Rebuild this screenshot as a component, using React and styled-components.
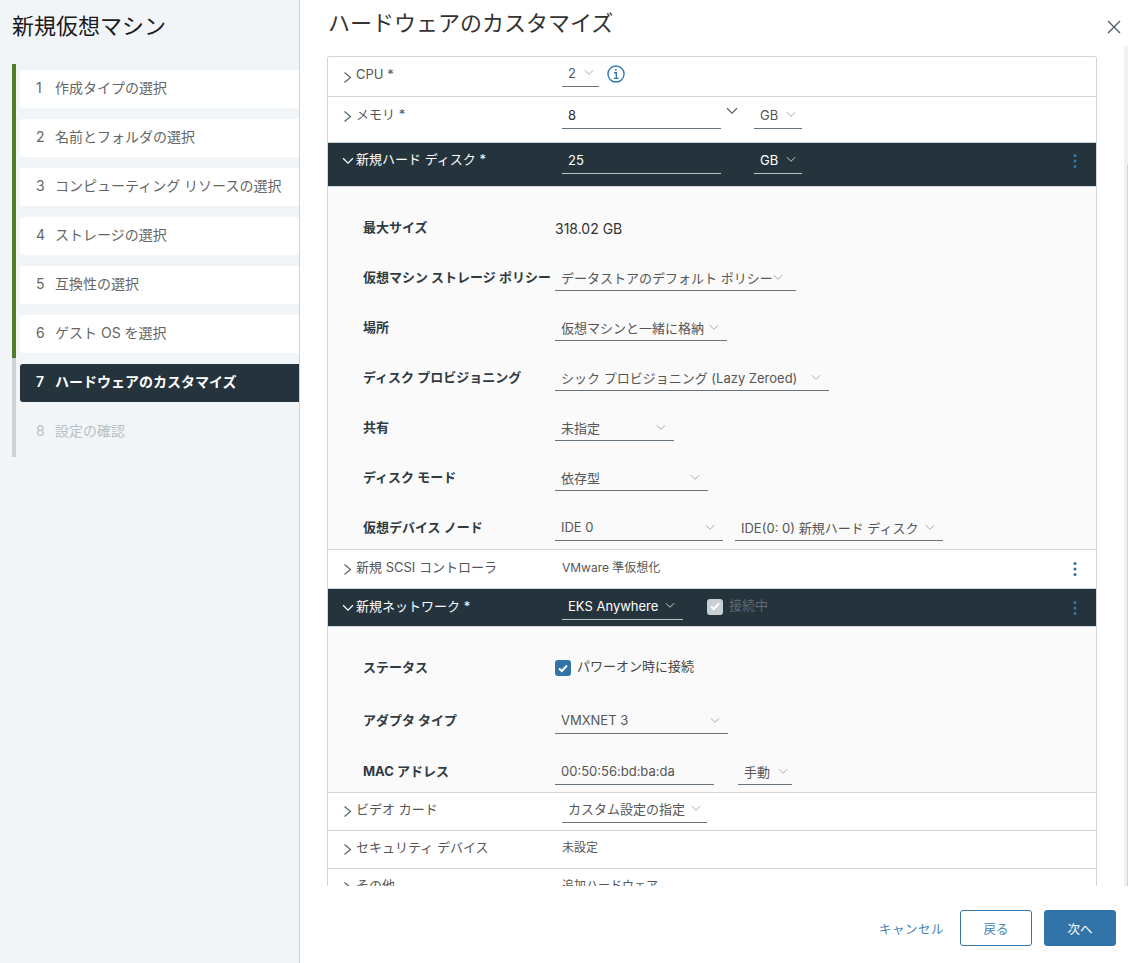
import React from 'react';
import styled, { createGlobalStyle } from 'styled-components';

const GlobalStyle = createGlobalStyle`
    html, body {
        margin: 0;
        padding: 0;
        background: #fff;
    }
    body {
        font-family: "Inter", "Noto Sans CJK JP", sans-serif;
        font-size: 13px;
        color: #565656;
    }
`;

const Page = styled.div`
    display: flex;
    width: 1128px;
    height: 963px;
    overflow: hidden;
    position: relative;
`;

const Sidebar = styled.aside`
    width: 299px;
    flex: none;
    background: #f2f5f8;
    border-right: 1px solid #c9d3da;
`;

const WizardTitle = styled.h2`
    margin: 0;
    height: 64px;
    padding: 11px 0 0 12px;
    box-sizing: border-box;
    font-size: 22px;
    line-height: 30px;
    font-weight: 400;
    color: #1a1a1a;
`;

const StepSlot = styled.div`
    margin-left: 12px;
    padding: 6px 0 5px 4px;
    border-left: 4px solid ${p => (p.$done ? '#4f7f28' : '#ccd3d6')};

    &:last-child {
        padding-bottom: 6px;
    }
`;

const Step = styled.div`
    display: flex;
    align-items: center;
    height: 38px;
    box-sizing: border-box;
    padding: 0 0 4px 16px;
    border-radius: 3px 0 0 3px;
    font-size: 14px;
    background: ${p => (p.$active ? '#25333d' : p.$todo ? 'transparent' : '#fff')};
    color: ${p => (p.$active ? '#fff' : p.$todo ? '#b9bfc3' : '#666')};
    font-weight: ${p => (p.$active ? 600 : 400)};
`;

const StepNumber = styled.span`
    width: 19px;
    flex: none;
`;

const Main = styled.main`
    flex: 1;
    display: flex;
    flex-direction: column;
    min-width: 0;
`;

const MainHeader = styled.header`
    height: 56px;
    flex: none;
    display: flex;
    justify-content: space-between;
    padding: 8px 5px 0 28px;
    box-sizing: border-box;
`;

const MainTitle = styled.h1`
    margin: 0;
    font-size: 22px;
    line-height: 30px;
    font-weight: 400;
    color: #333;
`;

const CloseButton = styled.button`
    width: 18px;
    height: 18px;
    margin: 11px 0 0;
    padding: 0;
    border: 0;
    background: none;
    color: #4a5b66;
`;

const ScrollArea = styled.div`
    height: 830px;
    flex: none;
    overflow: hidden;
    padding-left: 27px;
`;

const Track = styled.div`
    position: absolute;
    right: 0;
    top: 46px;
    width: 4px;
    height: 840px;
    background: #f1f1f1;

    &::after {
        content: '';
        position: absolute;
        right: 0;
        top: 119px;
        width: 1px;
        height: 721px;
        background: #d4d4d4;
    }
`;

const Table = styled.div`
    width: 770px;
    box-sizing: border-box;
    border: 1px solid #ccd6dc;
    border-bottom: 0;
    border-radius: 3px 3px 0 0;
`;

const Row = styled.div`
    display: flex;
    align-items: center;
    height: ${p => p.$h}px;
    box-sizing: border-box;
    padding-bottom: ${p => p.$pb || 0}px;
    border-bottom: 1px solid #ccd6dc;
    background: ${p => (p.$dark ? '#25333d' : '#fff')};
    color: ${p => (p.$dark ? '#fff' : '#565656')};
    position: relative;
`;

const Toggle = styled.span`
    width: 28px;
    flex: none;
    display: flex;
    justify-content: flex-end;
    padding-right: ${p => (p.$dark ? 2 : 4)}px;
    box-sizing: border-box;
    margin-top: 1px;
    color: ${p => (p.$dark ? '#fff' : '#5c6b75')};
`;

const RowLabel = styled.span`
    width: 206px;
    flex: none;
    margin-top: -5px;
`;

const RowValues = styled.div`
    display: flex;
    align-items: center;
    gap: ${p => p.$gap ?? 12}px;
    margin-top: ${p => p.$mt || 0}px;
`;

const RowText = styled.span`
    font-size: 12px;
    margin-top: -5px;
`;

const Select = styled.div`
    width: ${p => p.$w}px;
    height: 26px;
    flex: none;
    box-sizing: border-box;
    display: flex;
    align-items: center;
    justify-content: space-between;
    padding: 0 ${p => p.$pr ?? 8}px 1px 6px;
    border-bottom: 1px solid ${p => (p.$dark ? '#b9c2c8' : '#67737c')};
    color: ${p => (p.$dark ? '#fff' : p.$strong ? '#2f2f2f' : '#565656')};
    white-space: nowrap;
`;

const Arrow = styled.span`
    color: ${p => (p.$dark ? '#c5ccd1' : '#a3abb1')};
    display: flex;
`;

const Input = styled(Select)`
    padding-right: 0;
`;

const StackedArrow = styled.span`
    width: 22px;
    margin: -10px 11px 0 0;
    display: flex;
    justify-content: center;
    color: #55626b;
`;

const RowEnd = styled.button`
    position: absolute;
    right: 19px;
    top: calc(50% - ${p => (p.$pb || 0) / 2}px);
    transform: translateY(-50%);
    padding: 0;
    border: 0;
    background: none;
    display: flex;
    color: ${p => (p.$dark ? '#2f79b0' : '#2f6f9f')};
`;

const Panel = styled.div`
    padding: 28px 0 ${p => p.$pb}px 35px;
    background: #fafafa;
    border-bottom: 1px solid #ccd6dc;
`;

const PanelRow = styled.div`
    display: flex;
    align-items: center;
    height: 26px;
    margin-top: ${p => p.$top || 0}px;
`;

const PanelLabel = styled.div`
    width: 192px;
    flex: none;
    margin-top: -3px;
    font-weight: 700;
    color: #2f3a42;
    white-space: nowrap;
`;

const PanelValue = styled.div`
    display: flex;
    align-items: center;
    gap: ${p => p.$gap || 12}px;
    color: #333;
`;

const MaxSize = styled.span`
    font-size: 14px;
`;

const CheckBox = styled.span`
    width: 16px;
    height: 16px;
    flex: none;
    display: flex;
    align-items: center;
    justify-content: center;
    border-radius: 3px;
    color: #fff;
    background: ${p => (p.$off ? '#c9d0d4' : '#3374a8')};
`;

const CheckLabel = styled.span`
    color: ${p => (p.$off ? '#5e6b73' : '#444')};
    margin-top: ${p => (p.$off ? -4 : -5)}px;
`;

const Footer = styled.footer`
    flex: 1;
    display: flex;
    align-items: flex-start;
    justify-content: flex-end;
    gap: 12px;
    padding: 24px 12px 0 0;
`;

const LinkButton = styled.button`
    height: 36px;
    margin-right: 4px;
    padding: 0;
    border: 0;
    background: none;
    font: inherit;
    font-size: 12.5px;
    letter-spacing: 0.5px;
    color: #4583b2;
`;

const Button = styled.button`
    width: 72px;
    height: 36px;
    box-sizing: border-box;
    border-radius: 3px;
    border: 1px solid #3374a8;
    font: inherit;
    font-size: 12.5px;
    background: ${p => (p.$primary ? '#3374a8' : '#fff')};
    color: ${p => (p.$primary ? '#fff' : '#4583b2')};
`;

const ChevronRight = () => (
    <svg width="9" height="13" viewBox="0 0 9 13" fill="none" stroke="currentColor" strokeWidth="1.3">
        <path d="M1.5 1.5 L7.5 6.5 L1.5 11.5" />
    </svg>
);

const ChevronDown = ({ size = 10 }) => (
    <svg width={size} height={Math.round(size * 0.65)} viewBox="0 0 11 7" fill="none" stroke="currentColor" strokeWidth="1.1">
        <path d="M1 1 L5.5 5.5 L10 1" />
    </svg>
);

const Check = () => (
    <svg width="10" height="9" viewBox="0 0 10 9" fill="none" stroke="currentColor" strokeWidth="2">
        <path d="M1 4.5 L3.8 7 L9 1.5" />
    </svg>
);

const InfoIcon = () => (
    <svg width="18" height="18" viewBox="0 0 17 17" fill="none" stroke="#2f79b0" strokeWidth="1.3">
        <circle cx="8.5" cy="8.5" r="7.6" />
        <path d="M6.6 7.3 H8.8 V12.6 M6.4 12.6 H11" />
        <circle cx="8.4" cy="4.6" r="0.9" fill="#2f79b0" stroke="none" />
    </svg>
);

const Kebab = () => (
    <svg width="4" height="16" viewBox="0 0 4 16" fill="currentColor">
        <circle cx="2" cy="2.5" r="1.5" />
        <circle cx="2" cy="8" r="1.5" />
        <circle cx="2" cy="13.5" r="1.5" />
    </svg>
);

const CloseIcon = () => (
    <svg width="14" height="14" viewBox="0 0 14 14" fill="none" stroke="currentColor" strokeWidth="1.3">
        <path d="M1 1 L13 13 M13 1 L1 13" />
    </svg>
);

const steps = [
    '作成タイプの選択',
    '名前とフォルダの選択',
    'コンピューティング リソースの選択',
    'ストレージの選択',
    '互換性の選択',
    'ゲスト OS を選択',
    'ハードウェアのカスタマイズ',
    '設定の確認'
];

const Dropdown = ({ w, children, dark, strong, pr }) => (
    <Select $w={w} $dark={dark} $strong={strong} $pr={pr}>
        <span>{children}</span>
        <Arrow $dark={dark}><ChevronDown /></Arrow>
    </Select>
);

const HeaderRow = ({ h, pb, dark, label, children, menu }) => (
    <Row $h={h} $pb={pb} $dark={dark}>
        <Toggle $dark={dark}>{dark ? <ChevronDown size={12} /> : <ChevronRight />}</Toggle>
        <RowLabel>{label}</RowLabel>
        {children}
        {menu && <RowEnd $dark={dark} $pb={pb}><Kebab /></RowEnd>}
    </Row>
);

const App = () => (
    <Page>
        <GlobalStyle />
        <Sidebar>
            <WizardTitle>新規仮想マシン</WizardTitle>
            {steps.map((step, i) => (
                <StepSlot key={step} $done={i < 6}>
                    <Step $active={i === 6} $todo={i === 7}>
                        <StepNumber>{i + 1}</StepNumber>
                        {step}
                    </Step>
                </StepSlot>
            ))}
        </Sidebar>
        <Main>
            <MainHeader>
                <MainTitle>ハードウェアのカスタマイズ</MainTitle>
                <CloseButton><CloseIcon /></CloseButton>
            </MainHeader>
            <ScrollArea>
                <Table>
                    <HeaderRow h={40} label="CPU *">
                        <RowValues $gap={8} $mt={-6}>
                            <Dropdown w={37} pr={5}>2</Dropdown>
                            <InfoIcon />
                        </RowValues>
                    </HeaderRow>
                    <HeaderRow h={46} pb={8} label="メモリ *">
                        <RowValues $gap={0}>
                            <Input as="div" $w={159} $strong>8</Input>
                            <StackedArrow><ChevronDown size={12} /></StackedArrow>
                            <Dropdown w={48} pr={6}>GB</Dropdown>
                        </RowValues>
                    </HeaderRow>
                    <HeaderRow h={44} pb={8} dark label="新規ハード ディスク *" menu>
                        <RowValues $gap={33}>
                            <Input as="div" $w={159} $dark>25</Input>
                            <Dropdown w={48} dark pr={6}>GB</Dropdown>
                        </RowValues>
                    </HeaderRow>
                    <Panel $pb={8}>
                        <PanelRow>
                            <PanelLabel>最大サイズ</PanelLabel>
                            <PanelValue><MaxSize>318.02 GB</MaxSize></PanelValue>
                        </PanelRow>
                        <PanelRow $top={24}>
                            <PanelLabel>仮想マシン ストレージ ポリシー</PanelLabel>
                            <PanelValue><Dropdown w={241} pr={14}>データストアのデフォルト ポリシー</Dropdown></PanelValue>
                        </PanelRow>
                        <PanelRow $top={24}>
                            <PanelLabel>場所</PanelLabel>
                            <PanelValue><Dropdown w={172}>仮想マシンと一緒に格納</Dropdown></PanelValue>
                        </PanelRow>
                        <PanelRow $top={24}>
                            <PanelLabel>ディスク プロビジョニング</PanelLabel>
                            <PanelValue><Dropdown w={274}>シック プロビジョニング (Lazy Zeroed)</Dropdown></PanelValue>
                        </PanelRow>
                        <PanelRow $top={24}>
                            <PanelLabel>共有</PanelLabel>
                            <PanelValue><Dropdown w={119}>未指定</Dropdown></PanelValue>
                        </PanelRow>
                        <PanelRow $top={24}>
                            <PanelLabel>ディスク モード</PanelLabel>
                            <PanelValue><Dropdown w={153}>依存型</Dropdown></PanelValue>
                        </PanelRow>
                        <PanelRow $top={24}>
                            <PanelLabel>仮想デバイス ノード</PanelLabel>
                            <PanelValue>
                                <Dropdown w={168}>IDE 0</Dropdown>
                                <Dropdown w={208}>IDE(0: 0) 新規ハード ディスク</Dropdown>
                            </PanelValue>
                        </PanelRow>
                    </Panel>
                    <HeaderRow h={39} label="新規 SCSI コントローラ" menu>
                        <RowText>VMware 準仮想化</RowText>
                    </HeaderRow>
                    <HeaderRow h={38} dark label="新規ネットワーク *" menu>
                        <RowValues $gap={24} $mt={-2}>
                            <Dropdown w={121} dark>EKS Anywhere</Dropdown>
                            <RowValues $gap={6}>
                                <CheckBox $off><Check /></CheckBox>
                                <CheckLabel $off>接続中</CheckLabel>
                            </RowValues>
                        </RowValues>
                    </HeaderRow>
                    <Panel $pb={7}>
                        <PanelRow>
                            <PanelLabel>ステータス</PanelLabel>
                            <PanelValue $gap={6}>
                                <CheckBox><Check /></CheckBox>
                                <CheckLabel>パワーオン時に接続</CheckLabel>
                            </PanelValue>
                        </PanelRow>
                        <PanelRow $top={27}>
                            <PanelLabel>アダプタ タイプ</PanelLabel>
                            <PanelValue><Dropdown w={173}>VMXNET 3</Dropdown></PanelValue>
                        </PanelRow>
                        <PanelRow $top={25}>
                            <PanelLabel>MAC アドレス</PanelLabel>
                            <PanelValue $gap={24}>
                                <Input as="div" $w={159}>00:50:56:bd:ba:da</Input>
                                <Dropdown w={54} pr={4}>手動</Dropdown>
                            </PanelValue>
                        </PanelRow>
                    </Panel>
                    <HeaderRow h={38} pb={2} label="ビデオ カード">
                        <RowValues $mt={-2}>
                            <Dropdown w={145} pr={6}>カスタム設定の指定</Dropdown>
                        </RowValues>
                    </HeaderRow>
                    <HeaderRow h={38} pb={2} label="セキュリティ デバイス">
                        <RowText>未設定</RowText>
                    </HeaderRow>
                    <HeaderRow h={38} pb={2} label="その他">
                        <RowText>追加ハードウェア</RowText>
                    </HeaderRow>
                </Table>
            </ScrollArea>
            <Footer>
                <LinkButton>キャンセル</LinkButton>
                <Button>戻る</Button>
                <Button $primary>次へ</Button>
            </Footer>
        </Main>
        <Track />
    </Page>
);

export default App;
